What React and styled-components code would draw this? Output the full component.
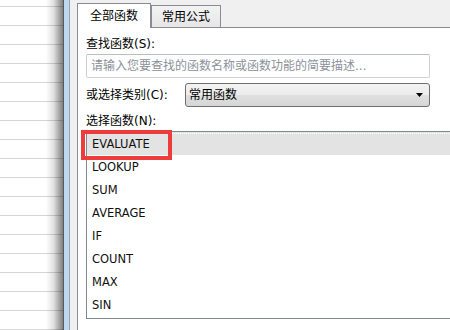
import React from 'react';
import styled, { createGlobalStyle } from 'styled-components';

const Global = createGlobalStyle`
  html, body { margin: 0; padding: 0; width: 450px; height: 330px; overflow: hidden; background: #fff; }
  body { font-family: "DejaVu Sans", "Noto Sans CJK SC", sans-serif; color: #000; }
`;

const Page = styled.div`
  display: flex;
  width: 450px;
  height: 330px;
  overflow: hidden;
`;

const Sheet = styled.div`
  position: relative;
  flex: 0 0 63px;
  background-color: #fff;
  background-image: linear-gradient(to bottom, #d6d6d6 0 1px, transparent 1px);
  background-size: 100% 19px;
  background-position: 0 6px;
  &::after {
    content: '';
    position: absolute;
    top: 0;
    bottom: 0;
    right: 0;
    width: 17px;
    background: linear-gradient(to right, rgba(0,0,0,0), rgba(0,0,0,0.12) 45%, rgba(0,0,0,0.5));
  }
`;

const FrameEdge = styled.div`
  flex: 0 0 7px;
  box-sizing: border-box;
  background: #bfd7f0;
  border-left: 1px solid #5a5a5a;
  border-right: 1px solid #97a3b1;
`;

const Dialog = styled.div`
  flex: 1;
  min-width: 0;
  background: #f0f0f0;
  padding: 3px 0 0 7px;
  display: flex;
  flex-direction: column;
`;

const TabStrip = styled.div`
  display: flex;
  align-items: flex-end;
  height: 24px;
  position: relative;
  z-index: 1;
`;

const Tab = styled.div`
  box-sizing: border-box;
  width: ${p => p.$w}px;
  height: ${p => (p.$active ? 25 : 22)}px;
  margin-bottom: ${p => (p.$active ? -1 : 0)}px;
  border: 1px solid #898c95;
  border-bottom: none;
  background: ${p => (p.$active ? '#fff' : 'linear-gradient(#f3f3f3, #e6e6e6)')};
  display: flex;
  align-items: center;
  justify-content: center;
  padding-top: ${p => (p.$active ? 0 : 1)}px;
  font-size: 12px;
  line-height: 16px;
`;

const Panel = styled.div`
  flex: 1;
  background: #fff;
  border-top: 1px solid #898c95;
  border-left: 1px solid #898c95;
  padding-left: 8px;
  display: flex;
  flex-direction: column;
`;

const Label = styled.div`
  font-size: 12px;
  line-height: 16px;
  height: 16px;
  margin-top: ${p => p.$mt}px;
  white-space: nowrap;
`;

const SearchInput = styled.input`
  box-sizing: border-box;
  margin-top: 2px;
  width: 344px;
  height: 24px;
  border: 1px solid #cdd1d7;
  border-top-color: #b9bdc4;
  border-radius: 2px;
  padding: 0 4px;
  font-family: "DejaVu Sans", "Noto Sans CJK SC", sans-serif;
  font-size: 12px;
  outline: none;
  background: #fff;
  &::placeholder { color: #8c919a; }
`;

const CategoryRow = styled.div`
  display: flex;
  align-items: center;
  margin-top: 5px;
  height: 24px;
`;

const RowLabel = styled.div`
  width: 99px;
  font-size: 12px;
  line-height: 16px;
  white-space: nowrap;
`;

const Combo = styled.div`
  box-sizing: border-box;
  width: 245px;
  height: 24px;
  border: 1px solid #707070;
  border-radius: 3px;
  background: linear-gradient(#f3f3f3 0%, #ececec 50%, #dfdfdf 51%, #d6d6d6 100%);
  display: flex;
  align-items: center;
  justify-content: space-between;
  padding: 0 5px 0 3px;
  font-size: 12px;
  line-height: 16px;
`;

const ListBox = styled.div`
  position: relative;
  margin-top: 2px;
  height: 188px;
  width: 420px;
  box-sizing: border-box;
  border: 1px solid #828790;
`;

const Item = styled.div`
  position: relative;
  height: 23px;
  line-height: 24px;
  padding-left: 5px;
  font-size: 11.5px;
  color: #111;
  background: ${p => (p.$selected ? '#e3e3e3' : 'transparent')};
  &::before {
    content: '';
    display: ${p => (p.$selected ? 'block' : 'none')};
    position: absolute;
    left: 0;
    right: 0;
    top: 1px;
    border-top: 1px dotted #fff;
  }
`;

const Highlight = styled.div`
  position: absolute;
  left: -6px;
  top: -2px;
  width: 91px;
  height: 30px;
  box-sizing: border-box;
  border: 4px solid #ee3b3b;
  pointer-events: none;
`;

const functions = ['EVALUATE', 'LOOKUP', 'SUM', 'AVERAGE', 'IF', 'COUNT', 'MAX', 'SIN'];

export default function App() {
  return (
    <>
      <Global />
      <Page>
        <Sheet />
        <FrameEdge />
        <Dialog>
          <TabStrip>
            <Tab $active $w={74}>全部函数</Tab>
            <Tab $w={70}>常用公式</Tab>
          </TabStrip>
          <Panel>
            <Label $mt={8}>查找函数(S):</Label>
            <SearchInput placeholder="请输入您要查找的函数名称或函数功能的简要描述..." readOnly />
            <CategoryRow>
              <RowLabel>或选择类别(C):</RowLabel>
              <Combo>
                <span>常用函数</span>
                <svg width="8" height="5" viewBox="0 0 8 5">
                  <path d="M0 0H7L3.5 4Z" fill="#000" />
                </svg>
              </Combo>
            </CategoryRow>
            <Label $mt={6}>选择函数(N):</Label>
            <ListBox>
              {functions.map((f, i) => (
                <Item key={f} $selected={i === 0}>{f}</Item>
              ))}
              <Highlight />
            </ListBox>
          </Panel>
        </Dialog>
      </Page>
    </>
  );
}
